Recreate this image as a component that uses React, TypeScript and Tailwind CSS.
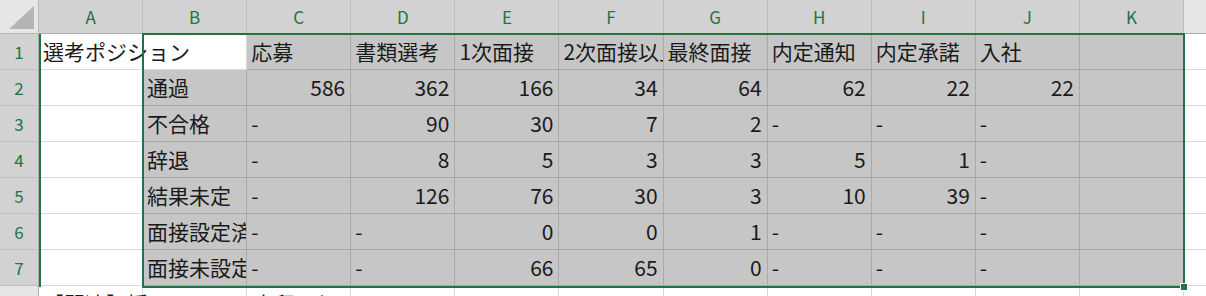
import React from "react";

const COLS = ["A", "B", "C", "D", "E", "F", "G", "H", "I", "J", "K"];

// sheet values, one array per row (A..K)
const ROWS: string[][] = [
  ["選考ポジション", "", "応募", "書類選考", "1次面接", "2次面接以上", "最終面接", "内定通知", "内定承諾", "入社", ""],
  ["", "通過", "586", "362", "166", "34", "64", "62", "22", "22", ""],
  ["", "不合格", "-", "90", "30", "7", "2", "-", "-", "-", ""],
  ["", "辞退", "-", "8", "5", "3", "3", "5", "1", "-", ""],
  ["", "結果未定", "-", "126", "76", "30", "3", "10", "39", "-", ""],
  ["", "面接設定済", "-", "-", "0", "0", "1", "-", "-", "-", ""],
  ["", "面接未設定", "-", "-", "66", "65", "0", "-", "-", "-", ""],
  ["【関連】採用フローの歩留まり", "", "", "", "", "", "", "", "", "", ""],
];

const isNumber = (v: string) => /^\d+$/.test(v);

function Corner() {
  return (
    <div className="bg-[#e6e6e6] border-r border-b border-[#b5b5b5] relative">
      <svg width="39" height="34" className="absolute left-0 top-0">
        <polygon points="34,6 34,29 9,29" fill="#b4b4b4" />
      </svg>
    </div>
  );
}

function Cell({ value, row, col }: { value: string; row: number; col: number }) {
  const shaded = row < 7 && col > 0 && !(row === 0 && col === 1);
  const spill = col === 0 && (row === 0 || row === 7);
  const right = isNumber(value);
  return (
    <div
      className={`flex border-r border-b whitespace-nowrap text-[21px] leading-none text-[#1a1a1a] ${
        shaded ? "bg-[#c6c6c6] border-[#a9a9a9]" : "bg-white border-[#dadada]"
      } ${row === 7 ? "items-start pt-[7px]" : "items-center"} ${
        right ? "justify-end pr-[5px]" : "justify-start pl-[4px]"
      } ${spill ? "overflow-visible relative z-10" : "overflow-hidden"}`}
    >
      {value}
    </div>
  );
}

export default function App() {
  return (
    <div
      className="w-[1206px] h-[296px] overflow-hidden bg-white relative"
      style={{ fontFamily: '"Noto Sans CJK JP", "Noto Sans", sans-serif' }}
    >
      <div className="grid grid-cols-[39px_repeat(11,104.1px)_1fr] grid-rows-[34px_repeat(8,36px)]">
        <Corner />
        {COLS.map((c) => (
          <div
            key={c}
            className="flex items-center justify-center bg-[#d2d2d2] border-r border-b border-r-[#bcbcbc] border-b-[#ababab] text-[#217346] text-[17px]"
          >
            {c}
          </div>
        ))}
        <div className="bg-[#e6e6e6] border-b border-[#ababab]" />

        {ROWS.map((r, ri) => (
          <React.Fragment key={ri}>
            <div
              className={`flex items-center justify-center border-r border-b border-r-[#ababab] text-[17px] ${
                ri < 7
                  ? "bg-[#d2d2d2] border-b-[#bdbdbd] text-[#217346]"
                  : "bg-[#e6e6e6] border-b-[#c8c8c8] text-[#444]"
              }`}
            >
              {ri + 1}
            </div>
            {r.map((v, ci) => (
              <Cell key={ci} value={v} row={ri} col={ci} />
            ))}
            <div className="bg-white border-b border-[#dadada]" />
          </React.Fragment>
        ))}
      </div>

      {/* selection outlines */}
      <div className="absolute left-[39px] top-[34px] w-[2px] h-[253px] bg-[#217346] z-20" />
      <div className="absolute left-[142px] top-[33px] w-[1043px] h-[255px] border-2 border-[#217346] z-20" />
      <div className="absolute left-[1180px] top-[283px] w-[8px] h-[8px] bg-[#217346] border border-white z-30" />
    </div>
  );
}
